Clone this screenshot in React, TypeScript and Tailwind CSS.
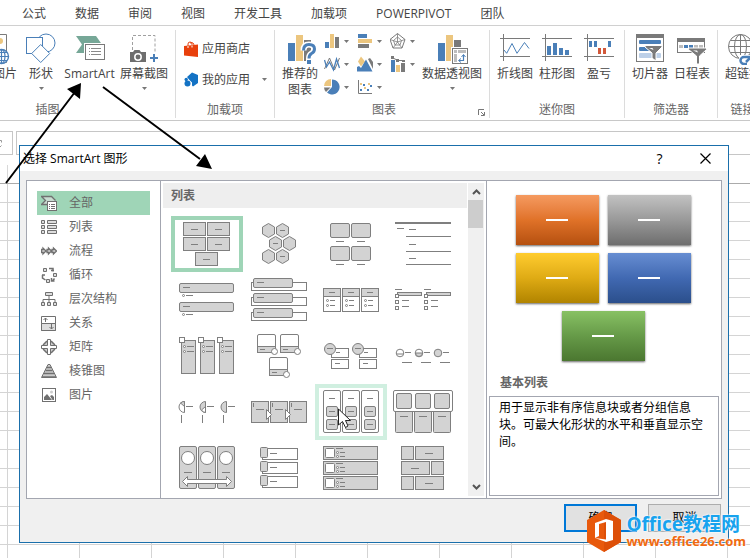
import React from "react";

type Kids = { children?: React.ReactNode };

const LINE = "#7f7f7f";
const FILL = "#d3d3d3";
const BLUE = "#4a7fb8";
const SAND = "#ecc67f";
const GRAY = "#7a7a7a";

/* ---------- drawing helpers ---------- */

function Box({ x, y, w, h, r = 0, fill = FILL }: { x: number; y: number; w: number; h: number; r?: number; fill?: string }) {
  return <rect x={x + 0.5} y={y + 0.5} width={w - 1} height={h - 1} rx={r} fill={fill} stroke={LINE} />;
}

function Dash({ x, y, w = 7 }: { x: number; y: number; w?: number }) {
  return <rect x={x} y={y} width={w} height={1} fill={LINE} />;
}

function Dot({ x, y }: { x: number; y: number }) {
  return <circle cx={x + 0.5} cy={y + 0.5} r={1} fill="#fff" stroke={LINE} />;
}

function Hex({ x, y, mark }: { x: number; y: number; mark?: boolean }) {
  return (
    <g>
      <path d={`M${x} ${y - 7}l6 3.5v7l-6 3.5l-6 -3.5v-7z`} fill={FILL} stroke={LINE} />
      {mark && <Dash x={x - 2.5} y={y - 0.5} w={5} />}
    </g>
  );
}

/* ---------- ribbon icons ---------- */

function Big({ children }: Kids) {
  return (
    <svg width="32" height="32" viewBox="0 0 32 32" fill="none" className="shrink-0" aria-hidden="true">
      {children}
    </svg>
  );
}

function Small({ children }: Kids) {
  return (
    <svg width="16" height="16" viewBox="0 0 16 16" fill="none" className="shrink-0" aria-hidden="true">
      {children}
    </svg>
  );
}

function Caret() {
  return (
    <svg width="5" height="3" viewBox="0 0 5 3" className="shrink-0" aria-hidden="true">
      <path d="M0 0h5L2.5 3z" fill="#777" />
    </svg>
  );
}

const PictureIcon = () => (
  <Big>
    <path d="M0 1.500h17.500v28H0" stroke={GRAY} fill="#fff" />
    <circle cx="11" cy="8" r="3" fill={SAND} />
    <circle cx="12.500" cy="23.500" r="7" fill="#fff" stroke={BLUE} strokeWidth="1.400" />
    <path d="M5.500 23.500h14M7 19.500h11M7 27.500h11M12.500 16.500v14" stroke={BLUE} strokeWidth="1.200" />
    <ellipse cx="12.500" cy="23.500" rx="3.500" ry="7" stroke={BLUE} strokeWidth="1.200" />
  </Big>
);

const ShapesIcon = () => (
  <Big>
    <circle cx="21" cy="10" r="9" stroke={BLUE} fill="#fff" />
    <rect x="1.500" y="4.500" width="16" height="16" stroke={BLUE} fill="#fff" />
    <path d="M15.700 11.500l9 9l-9 9l-9 -9z" stroke={BLUE} fill="#fff" />
  </Big>
);

const SmartArtIcon = () => (
  <Big>
    <path d="M2 3h20l6 8.500l-6 8.500H2l6 -8.500z" fill="#76a797" />
    <rect x="10" y="10" width="22" height="18" fill="#fff" />
    <rect x="11.500" y="11.500" width="19" height="15" fill="#fff" stroke={GRAY} />
    <path d="M15 15.500h1M17 15.500h10M15 18.500h1M17 18.500h10M15 21.500h1M17 21.500h10" stroke="#8a8a8a" />
  </Big>
);

const ScreenshotIcon = () => (
  <Big>
    <path d="M4.500 17V2.500H27V19" stroke="#a0a0a0" strokeDasharray="3 2" />
    <path d="M2 19h3l1.500 -2h5l1.500 2h5v10H2z" fill="#6e6e6e" />
    <circle cx="10" cy="24" r="3.200" stroke="#fff" strokeWidth="1.500" />
    <path d="M22 25h8M26 21v8" stroke={BLUE} strokeWidth="2" />
  </Big>
);

const StoreIcon = () => (
  <Small>
    <path d="M0 5l14 -1.500V16L0 14.500z" fill="#e8400c" />
    <path d="M4 7V3q0 -2 2 -2t2 2v3M6 2q4 -1.500 4 3" stroke="#e8400c" />
    <path d="M4 5v2M8 4.500v2" stroke="#fff" />
  </Small>
);

const AppsIcon = () => (
  <Small>
    <path d="M3 5l5 -4.500l6 2.500v8l-5 3.500l-1 -1v-3l-3 -3z" fill="#1372c4" />
    <circle cx="2.200" cy="7.500" r="1.700" fill="#1372c4" />
    <circle cx="3.500" cy="11.500" r="3" fill="#1372c4" />
  </Small>
);

const RecommendIcon = () => (
  <Big>
    <rect x="4" y="10" width="7" height="18" fill={BLUE} />
    <rect x="12" y="2" width="7" height="26" fill={SAND} />
    <rect x="20" y="7" width="7" height="21" fill={GRAY} />
    <g stroke="#fff" strokeWidth="6">
      <path d="M19.500 17.500q0 -6 5.500 -6t5.500 4.500q0 3 -3 4.500q-2.500 1.500 -2.500 5v4.500" />
    </g>
    <path d="M19.500 17.500q0 -6 5.500 -6t5.500 4.500q0 3 -3 4.500q-2.500 1.500 -2.500 5" stroke={BLUE} strokeWidth="3" />
    <rect x="23" y="27" width="4" height="4" fill={BLUE} />
  </Big>
);

const PivotIcon = () => (
  <Big>
    <rect x="2" y="10" width="7" height="18" fill={BLUE} />
    <rect x="10" y="2" width="7" height="26" fill={SAND} />
    <rect x="18" y="7" width="7" height="9" fill={GRAY} />
    <rect x="15" y="14" width="17" height="18" fill="#fff" />
    <rect x="16.500" y="15.500" width="15" height="15" fill="#fff" stroke={GRAY} />
    <path d="M18 17h3v3h-3zM22 17h8v3h-8zM18 21h3v8h-3z" fill="#bdbdbd" />
    <path d="M23 27.500h4.500V22" stroke={BLUE} strokeWidth="1.200" />
    <path d="M25 25.500l-2.500 2l2.500 2M25.500 24l2 -2.500l2 2.500" stroke={BLUE} />
  </Big>
);

const SparkFrame = () => <path d="M1 5.500h30M1 23.500h30M4.500 1v27" stroke={GRAY} />;

const SparkLineIcon = () => (
  <Big>
    <SparkFrame />
    <path d="M5 17l2.700 3.300L13 10.500l5 9.800L25.500 9.500l4.500 6" stroke={BLUE} />
  </Big>
);

const SparkColumnIcon = () => (
  <Big>
    <SparkFrame />
    <path d="M6 13h4v9H6zM12 10h4v12h-4zM18 15h4v7h-4zM24 17h4v5h-4z" fill={BLUE} />
  </Big>
);

const WinLossIcon = () => (
  <Big>
    <SparkFrame />
    <path d="M6 8h3v6H6zM11 8h3v6h-3zM25 8h3v6h-3z" fill={BLUE} />
    <path d="M15 15h3v6h-3zM20 15h3v6h-3z" fill="#d2583a" />
  </Big>
);

const SlicerIcon = () => (
  <Big>
    <rect x="2.500" y="1.500" width="27" height="27" fill="#fff" stroke={GRAY} />
    <rect x="2" y="1" width="28" height="4" fill={GRAY} />
    <rect x="5" y="7" width="22" height="4" rx="1" fill={BLUE} />
    <rect x="5" y="14" width="14" height="4" rx="1" fill={BLUE} />
    <rect x="5" y="20" width="22" height="5" rx="1" fill="#bdd0e8" />
    <path d="M11 12.500h17v1.500l-6 6v8l-4 -3v-5l-7 -6z" fill={GRAY} stroke="#fff" />
    <path d="M15 15h3.500l1 2z" fill="#fff" />
  </Big>
);

const TimelineIcon = () => (
  <Big>
    <rect x="1.500" y="5.500" width="27" height="14" fill="#fff" stroke={GRAY} />
    <rect x="1" y="5" width="28" height="4" fill={GRAY} />
    <path d="M3 12h4v3H3zM18 12h4v3h-4zM23 12h4v3h-4z" fill="#bdbdbd" />
    <path d="M8 12h4v3H8zM13 12h4v3h-4z" fill={BLUE} />
    <path d="M12.500 15h18v1.500l-7 6.500v8h-3v-8l-8 -6.500z" fill={GRAY} stroke="#fff" />
    <path d="M17 17.500h4l1 2z" fill="#fff" />
  </Big>
);

const LinkIcon = () => (
  <Big>
    <g stroke={GRAY}>
      <circle cx="13.500" cy="13.500" r="12" fill="#fff" />
      <ellipse cx="13.500" cy="13.500" rx="6" ry="12" />
      <path d="M1.500 13.500h24M13.500 1.500v24M3.500 7.500h20M3.500 19.500h20" />
    </g>
    <rect x="12" y="22" width="13" height="9" fill="#fff" />
    <path d="M24 24h-7a3.500 3.500 0 0 0 0 7h3M19 29l4 -4h6" stroke={BLUE} strokeWidth="2.500" />
  </Big>
);

const smallCharts: { name: string; art: React.ReactNode }[] = [
  {
    name: "柱形图",
    art: (
      <>
        <rect x="1" y="9" width="4" height="6" fill={BLUE} />
        <rect x="6" y="1" width="4" height="14" fill={SAND} />
        <rect x="11" y="4" width="4" height="11" fill={GRAY} />
      </>
    ),
  },
  {
    name: "条形图",
    art: (
      <>
        <rect x="1" y="1" width="9" height="4" fill={BLUE} />
        <rect x="1" y="6" width="14" height="4" fill={SAND} />
        <rect x="1" y="11" width="11" height="4" fill={GRAY} />
      </>
    ),
  },
  {
    name: "雷达图",
    art: (
      <g stroke={GRAY}>
        <path d="M7.500 .5l7.500 6l-3 8.500H3L0 6.500z" />
        <path d="M7.500 4l4 3.500l-1.500 4.500H5L3.500 7.500zM7.500 .5V9M15 6.500L7.500 9l4.500 6M0 6.500L7.500 9L3 15" strokeWidth=".8" />
      </g>
    ),
  },
  {
    name: "折线图",
    art: (
      <>
        <path d="M.5 13l5 -11l5 12l5 -12" stroke={GRAY} />
        <path d="M.5 4l2 7l3 -5l4 8l3 -11l3 9" stroke={BLUE} strokeWidth="1.300" />
      </>
    ),
  },
  {
    name: "面积图",
    art: (
      <>
        <path d="M4 .5l4 5l-4 5l-3 -5z" fill={SAND} />
        <path d="M11 3l2 -1l3 4v7z" fill={GRAY} />
        <path d="M0 15.500V11l2 -1l2 2l5 -8.500l6.500 12z" fill={BLUE} />
      </>
    ),
  },
  {
    name: "组合图",
    art: (
      <>
        <rect x="1" y="4" width="4" height="12" fill={BLUE} />
        <rect x="6" y="9" width="4" height="7" fill={SAND} />
        <rect x="11" y="7" width="4" height="9" fill={GRAY} />
        <path d="M2 1.500l6 3h6" stroke={GRAY} />
        <path d="M1 0h3v3H1zM6 3h3v3H6zM12 4h3v2h-3z" fill={GRAY} />
      </>
    ),
  },
  {
    name: "饼图",
    art: (
      <>
        <path d="M8 8V.5a7.500 7.500 0 1 1 -5 13z" fill={BLUE} />
        <path d="M7 7V0a7 7 0 0 0 -7 7z" fill={SAND} />
        <path d="M6.500 8.500H0a7 7 0 0 0 2 4.500z" fill={GRAY} />
      </>
    ),
  },
  {
    name: "散点图",
    art: (
      <>
        <path d="M1.500 1v13.500H15" stroke={GRAY} />
        <path d="M3 10h2v2H3zM6 5h2v2H6zM13 6h2v2h-2zM10 10h2v2h-2z" fill={BLUE} />
        <path d="M3 4h2v2H3zM7 8h2v2H7zM11 4h2v2h-2z" fill={SAND} />
      </>
    ),
  },
];

/* ---------- ribbon ---------- */

function Group({ label, className, children, launcher }: Kids & { label: string; className: string; launcher?: boolean }) {
  return (
    <section aria-label={label} className={`relative flex h-[88px] shrink-0 flex-col justify-between border-r border-[#dcdcdc] pt-[3px] ${className}`}>
      <div className="flex items-start">{children}</div>
      <div className="text-center text-[#666]">{label}</div>
      {launcher && (
        <button aria-label="对话框启动器" className="absolute right-1 bottom-[2px]">
          <svg width="7" height="7" viewBox="0 0 7 7" fill="none" className="block" aria-hidden="true">
            <path d="M.5 6V.5H6M3 3l3 3M6.500 3v3.500H3" stroke="#777" />
          </svg>
        </button>
      )}
    </section>
  );
}

function BigButton({ icon, label, className = "w-[42px]", caret }: { icon: React.ReactNode; label: React.ReactNode; className?: string; caret?: boolean }) {
  return (
    <button className={`flex shrink-0 flex-col items-center gap-px whitespace-nowrap ${className}`}>
      {icon}
      <span>{label}</span>
      {caret && (
        <span className="pt-1">
          <Caret />
        </span>
      )}
    </button>
  );
}

function Ribbon() {
  return (
    <div className="flex h-[95px] border-b border-[#c8c8c8] pt-1">
      <Group label="插图" className="-ml-20 w-64">
        <div className="flex w-full justify-end pr-[7px]">
          <BigButton icon={<PictureIcon />} label="图片" className="w-9" />
          <BigButton icon={<ShapesIcon />} label="形状" className="w-9" caret />
          <BigButton icon={<SmartArtIcon />} label="SmartArt" className="w-[61px]" />
          <BigButton icon={<ScreenshotIcon />} label="屏幕截图" className="w-12" caret />
        </div>
      </Group>
      <Group label="加载项" className="w-[99px]">
        <div className="flex flex-col pl-2">
          <button className="flex h-[31px] items-center gap-[2px]">
            <StoreIcon />
            应用商店
          </button>
          <button className="flex h-[31px] items-center gap-[2px]">
            <AppsIcon />
            我的应用
            <span className="pl-[10px]">
              <Caret />
            </span>
          </button>
        </div>
      </Group>
      <Group label="图表" className="w-[215px] pl-1" launcher>
        <BigButton
          icon={<RecommendIcon />}
          label={
            <>
              推荐的
              <br />
              图表
            </>
          }
        />
        <div className="ml-[3px] grid w-[98px] grid-cols-[33px_33px_auto]">
          {smallCharts.map((c) => (
            <button key={c.name} aria-label={c.name} className="flex h-[23px] items-start gap-1">
              <Small>{c.art}</Small>
              <span className="flex h-4 items-center">
                <Caret />
              </span>
            </button>
          ))}
        </div>
        <BigButton icon={<PivotIcon />} label="数据透视图" className="w-[60px]" caret />
      </Group>
      <Group label="迷你图" className="w-[135px] px-1">
        <BigButton icon={<SparkLineIcon />} label="折线图" />
        <BigButton icon={<SparkColumnIcon />} label="柱形图" />
        <BigButton icon={<WinLossIcon />} label="盈亏" />
      </Group>
      <Group label="筛选器" className="w-[93px] px-1">
        <BigButton icon={<SlicerIcon />} label="切片器" />
        <BigButton icon={<TimelineIcon />} label="日程表" />
      </Group>
      <Group label="链接" className="w-[50px] px-1">
        <BigButton icon={<LinkIcon />} label="超链接" />
      </Group>
    </div>
  );
}

/* ---------- dialog: category list ---------- */

const S = "#707070";

const categories: { name: string; art: React.ReactNode }[] = [
  {
    name: "全部",
    art: (
      <>
        <path d="M6 9.500H.5l4 -4l-4 -4h10l4 4" stroke={S} strokeWidth="1.300" fill="#c9dcd1" />
        <rect x="6.500" y="6.500" width="9" height="9" fill="#fff" stroke={S} />
        <path d="M8 9.500h1M10 9.500h4M8 11.500h1M10 11.500h4M8 13.500h1M10 13.500h4" stroke={S} />
      </>
    ),
  },
  {
    name: "列表",
    art: (
      <g stroke={S} fill="#ddd">
        <path d="M.5 1.500h3v3h-3zM.5 6.500h3v3h-3zM.5 11.500h3v3h-3zM6.500 1.500h9v3h-9zM6.500 6.500h9v3h-9zM6.500 11.500h9v3h-9z" />
      </g>
    ),
  },
  {
    name: "流程",
    art: (
      <g stroke={S} fill="#ccc">
        <path d="M.5 6.500h1.500v-1.500l3 3l-3 3V9.500H.5zM6 6.500h1.500v-1.500l3 3l-3 3V9.500H6zM11 6.500h1.500v-1.500l3 3l-3 3V9.500H11z" strokeWidth="1.300" />
      </g>
    ),
  },
  {
    name: "循环",
    art: (
      <g stroke={S} fill="#ddd">
        <path d="M2.500 1.500h3v3h-3zM12.500 6.500h3v3h-3zM5.500 12.500h3v3h-3z" />
        <path d="M8 1.500h4v3M10 3.500h3M1 8h3M1.500 8v3l3 2M13.500 11.500l-2 2.500M10.500 11v3h3" strokeWidth="1.500" fill="none" />
      </g>
    ),
  },
  {
    name: "层次结构",
    art: (
      <g stroke={S} fill="#ddd">
        <path d="M4.500 1.500h7v3h-7zM.5 11.500h3v3h-3zM6.500 11.500h3v3h-3zM12.500 11.500h3v3h-3z" />
        <path d="M8 5v6M2 11V8.500h12V11" fill="none" />
      </g>
    ),
  },
  {
    name: "关系",
    art: (
      <g stroke={S}>
        <path d="M.5 1.500h14v14H.5z" fill="#fff" />
        <path d="M.5 8.500h14v7H.5z" fill="#ddd" />
        <path d="M4.500 7V3M2.500 5l2 -2l2 2M10.500 9v5M8.500 12l2 2l2 -2" />
      </g>
    ),
  },
  {
    name: "矩阵",
    art: (
      <g stroke={S}>
        <path d="M5.500 2.500h5l3 3v5l-3 3h-5l-3 -3v-5z" fill="#ccc" strokeWidth="1.500" />
        <path d="M6.500 .5h3v6h6v3h-6v6h-3v-6h-6v-3h6z" fill="#fff" />
      </g>
    ),
  },
  {
    name: "棱锥图",
    art: (
      <g stroke={S}>
        <path d="M7 1.500h2l6.500 13H.5z" fill="#ccc" />
        <path d="M6 4.500h4M4.500 7.500h7M3 10.500h10M1 14h14" strokeWidth="1.300" />
      </g>
    ),
  },
  {
    name: "图片",
    art: (
      <>
        <rect x="1.500" y="1.500" width="13" height="13" fill="#fff" stroke={S} />
        <path d="M3 13v-3l3 -3l5 6zM9 9l2 -1l2 2v3h-1.500z" fill={S} />
        <circle cx="10.500" cy="5" r="1.500" fill="#ccc" />
      </>
    ),
  },
];

/* ---------- dialog: layout thumbnails ---------- */

const three = [0, 19, 38];

const layouts: { name: string; art: React.ReactNode }[] = [
  {
    name: "基本列表",
    art: [[12, 6], [36, 6], [12, 21], [36, 21], [24, 36]].map(([x, y]) => (
      <g key={`${x}-${y}`}>
        <Box x={x} y={y} w={23} h={14} />
        <Dash x={x + 8} y={y + 7} />
      </g>
    )),
  },
  {
    name: "交替六边形",
    art: (
      <>
        <Hex x={25.5} y={14.5} />
        <Hex x={39.5} y={14.5} mark />
        <Hex x={32.5} y={27.5} mark />
        <Hex x={46.5} y={27.5} />
        <Hex x={25.5} y={40.5} />
        <Hex x={39.5} y={40.5} mark />
      </>
    ),
  },
  {
    name: "图片题注列表",
    art: [[15, 7], [36, 7], [15, 30], [36, 30]].map(([x, y]) => (
      <g key={`${x}-${y}`}>
        <Box x={x} y={y} w={20} h={15} r={1.5} />
        <Dash x={x + 6} y={y + 18} w={8} />
      </g>
    )),
  },
  {
    name: "线型列表",
    art: (
      <>
        <rect x="8" y="6" width="56" height="2" fill={LINE} />
        <Dash x={10} y={12} />
        <Dash x={22} y={13} />
        <Dash x={19} y={20} w={45} />
        <Dash x={22} y={28} />
        <Dash x={19} y={35} w={45} />
        <Dash x={22} y={42} />
        <Dash x={19} y={48} w={45} />
      </>
    ),
  },
  {
    name: "垂直项目符号列表",
    art: [11, 30].map((y) => (
      <g key={y}>
        <Box x={8} y={y} w={55} h={10} r={1.5} />
        <Dash x={12} y={y + 4} />
        <Dot x={12} y={y + 12} />
        <Dash x={15} y={y + 12} />
      </g>
    )),
  },
  {
    name: "垂直框列表",
    art: [6, 21, 36].map((y) => (
      <g key={y}>
        <Box x={8} y={y + 4} w={56} h={9} fill="#fff" />
        <Box x={10} y={y} w={40} h={10} r={1.5} />
        <Dash x={14} y={y + 4} />
      </g>
    )),
  },
  {
    name: "水平项目符号列表",
    art: three.map((d) => (
      <g key={d}>
        <Box x={8 + d} y={16} w={18} h={24} fill="#fff" />
        <Box x={8 + d} y={16} w={18} h={9} />
        <Dash x={14 + d} y={20} w={6} />
        <Dot x={12 + d} y={28} />
        <Dot x={12 + d} y={33} />
        <Dash x={15 + d} y={28} w={5} />
        <Dash x={15 + d} y={33} w={5} />
      </g>
    )),
  },
  {
    name: "方形重点列表",
    art: [0, 29].map((d) => (
      <g key={d}>
        <Dash x={8 + d} y={17} />
        <Box x={10 + d} y={20} w={25} h={4} />
        <Box x={8 + d} y={22} w={4} h={4} fill="#fff" />
        <Box x={8 + d} y={28} w={4} h={4} fill="#fff" />
        <Box x={8 + d} y={34} w={4} h={4} fill="#fff" />
        <Dash x={15 + d} y={28} />
        <Dash x={15 + d} y={34} />
      </g>
    )),
  },
  {
    name: "图片重点列表",
    art: three.map((d) => (
      <g key={d}>
        <Box x={10 + d} y={12} w={15} h={34} />
        <Box x={8 + d} y={9} w={6} h={6} fill="#fff" />
        <Dot x={13 + d} y={18} />
        <Dot x={13 + d} y={23} />
        <Dash x={16 + d} y={18} />
        <Dash x={16 + d} y={23} />
      </g>
    )),
  },
  {
    name: "蛇形图片重点列表",
    art: [[14, 6], [37, 6], [26, 29]].map(([x, y]) => (
      <g key={`${x}-${y}`}>
        <Box x={x} y={y} w={19} h={19} r={1.5} fill="#fff" />
        <Box x={x} y={y + 12} w={19} h={7} />
        <Dash x={x + 3} y={y + 15} w={5} />
        <circle cx={x + 17.5} cy={y + 17.5} r={3} fill="#fff" stroke={LINE} />
      </g>
    )),
  },
  {
    name: "堆叠列表",
    art: [0, 28].map((d) => (
      <g key={d}>
        <Box x={16 + d} y={20} w={18} h={10} fill="#fff" />
        <Box x={16 + d} y={31} w={18} h={10} fill="#fff" />
        <Dash x={21 + d} y={24} w={4} />
        <Dash x={20 + d} y={35} w={5} />
        <circle cx={15 + d} cy={21} r={5.5} fill={FILL} stroke={LINE} />
        <Dash x={12 + d} y={20} w={6} />
      </g>
    )),
  },
  {
    name: "递增圆圈流程",
    art: (
      <>
        {three.map((d) => (
          <g key={d}>
            <circle cx={13 + d} cy={25} r={3.8} fill={d === 38 ? FILL : "#fff"} stroke={LINE} />
            <Dash x={18 + d} y={24} w={6} />
            <Dash x={15 + d} y={34} w={10} />
          </g>
        ))}
        <path d="M9.500 26h7M28.500 25h7a3.500 3.500 0 0 1 -7 0" stroke={LINE} fill={FILL} />
      </>
    ),
  },
  {
    name: "饼图流程",
    art: (
      <>
        {[0, 21, 42].map((d) => (
          <g key={d}>
            <path d={`M${13.5 + d} 17.500a5.500 5.500 0 0 0 0 11z`} fill={d === 0 ? "#fff" : FILL} stroke={LINE} />
            <Dash x={15 + d} y={22} />
            <rect x={10 + d} y={31} width={1} height={8} fill={LINE} />
          </g>
        ))}
        <path d="M13.500 22.500l-4 -3.500q1.500 -1.500 4 -1.500z" fill={FILL} stroke={LINE} />
        <path d="M34.500 22.500l-4 3.500q1.500 2.500 4 2.500z" fill="#fff" stroke={LINE} />
      </>
    ),
  },
  {
    name: "详细流程",
    art: (
      <>
        {three.map((d) => (
          <g key={d}>
            <Box x={8 + d} y={17} w={18} h={22} />
            <rect x={10 + d} y={19} width={1} height={4} fill={LINE} />
            <Dash x={13 + d} y={25} w={8} />
          </g>
        ))}
        <path d="M23.500 25.500l5 5l-5 5zM42.500 25.500l5 5l-5 5z" fill="#fff" stroke={LINE} />
      </>
    ),
  },
  {
    name: "分组列表",
    art: three.map((d) => (
      <g key={d}>
        <Box x={8 + d} y={6} w={18} h={43} r={1.5} fill="#fff" />
        <Dash x={14 + d} y={14} w={6} />
        <Box x={11 + d} y={22} w={12} h={11} r={1.5} />
        <Box x={11 + d} y={35} w={12} h={11} r={1.5} />
        <Dash x={14 + d} y={27} w={6} />
        <Dash x={14 + d} y={40} w={6} />
      </g>
    )),
  },
  {
    name: "水平图片列表",
    art: (
      <>
        {three.map((d) => (
          <g key={d}>
            <Box x={8 + d} y={26} w={18} h={23} r={1} />
            <Dash x={13 + d} y={32} w={8} />
          </g>
        ))}
        <Box x={6} y={6} w={60} h={22} r={1.5} fill="#fff" />
        {three.map((d) => (
          <Box key={d} x={9 + d} y={9} w={16} h={16} r={1.5} />
        ))}
      </>
    ),
  },
  {
    name: "连续图片列表",
    art: (
      <>
        {three.map((d) => (
          <g key={d}>
            <Box x={8 + d} y={6} w={18} h={43} r={1.5} />
            <circle cx={17 + d} cy={18} r={6.5} fill="#fff" stroke={LINE} />
            <Dash x={13 + d} y={32} w={8} />
          </g>
        ))}
        <path d="M11.500 41.500l5 -5v3h39v-3l5 5l-5 5v-3h-39v3z" fill="#fff" stroke={LINE} />
      </>
    ),
  },
  {
    name: "垂直图片重点列表",
    art: [7, 21, 35].map((y) => (
      <g key={y}>
        <Box x={19} y={y + 1} w={36} h={12} fill="#fff" />
        <Box x={17} y={y} w={8} h={11} r={1} />
        <Dash x={27} y={y + 6} />
      </g>
    )),
  },
  {
    name: "垂直图片列表",
    art: [6, 21, 36].map((y) => (
      <g key={y}>
        <Box x={8} y={y} w={55} h={14} />
        <Box x={10} y={y + 2} w={10} h={10} r={1} fill="#fff" />
        <Dash x={21} y={y + 2} />
        <Dot x={22} y={y + 6} />
        <Dot x={22} y={y + 10} />
        <Dash x={25} y={y + 6} w={5} />
        <Dash x={25} y={y + 10} w={5} />
      </g>
    )),
  },
  {
    name: "水平交替列表",
    art: (
      <>
        {[6, 36].map((y) => (
          <g key={y}>
            <Box x={14} y={y} w={13} h={14} />
            <Box x={28} y={y} w={29} h={14} />
            <Dash x={38} y={y + 7} w={8} />
          </g>
        ))}
        <Box x={14} y={21} w={29} h={14} />
        <Box x={44} y={21} w={13} h={14} />
        <Dash x={24} y={28} w={8} />
      </>
    ),
  },
];

const previewCards = [
  "from-[#f59a5f] via-[#e07228] to-[#b5500f]",
  "from-[#c2c2c2] via-[#999] to-[#6e6e6e]",
  "from-[#ffcc2e] via-[#dfab14] to-[#b18400]",
  "from-[#678ed2] via-[#4169b2] to-[#2b4f8c]",
  "from-[#88c164] via-[#669a48] to-[#4b7730]",
];

function SmartArtDialog() {
  return (
    <div role="dialog" aria-labelledby="dlg-title" className="absolute top-[145px] right-[21px] left-[19px] border border-[#1a6fab] bg-[#f0f0f0]">
      <header className="flex h-[25px] items-center bg-white pl-[3px] text-black">
        <h1 id="dlg-title" className="flex-1">
          选择 SmartArt 图形
        </h1>
        <button aria-label="帮助" className="w-[45px] text-center text-sm font-medium">
          ?
        </button>
        <button aria-label="关闭" className="flex w-[46px] justify-center">
          <svg width="11" height="11" viewBox="0 0 11 11" aria-hidden="true">
            <path d="M.5 .5l10 10M10.500 .5l-10 10" stroke="#000" strokeWidth="1.200" />
          </svg>
        </button>
      </header>

      <div className="px-[6px] pt-[9px] pb-[10px]">
        <div className="flex h-[319px] border border-[#a3a6b0] bg-white">
          <ul className="w-[134px] shrink-0 border-r border-[#a3a6b0] px-[10px] pt-[10px]">
            {categories.map((c, i) => (
              <li key={c.name}>
                <button className={`flex h-6 w-full items-center gap-3 pl-1 text-[#666] ${i === 0 ? "bg-[#9fd5b7]" : ""}`}>
                  <Small>{c.art}</Small>
                  {c.name}
                </button>
              </li>
            ))}
          </ul>

          <div className="flex w-[326px] shrink-0 gap-px border-r border-[#a3a6b0] py-[2px] pl-[2px]">
            <div>
              <h2 className="flex h-[25px] w-[304px] items-center bg-[#eee] pl-2 font-bold text-[#666]">列表</h2>
              <div className="grid grid-cols-4 px-2 pt-2">
                {layouts.map((l, i) => (
                  <button
                    key={l.name}
                    aria-label={l.name}
                    className={`h-14 w-[72px] border-4 ${i === 0 ? "border-[#9fd5b7]" : i === 14 ? "border-[#d0efe0]" : "border-transparent"}`}
                  >
                    <svg width="64" height="48" viewBox="4 4 64 48" fill="none" className="block" aria-hidden="true">
                      {l.art}
                    </svg>
                  </button>
                ))}
              </div>
            </div>
            <div className="flex w-4 flex-col items-center bg-[#f0f0f0] pb-[6px]">
              <svg width="9" height="17" viewBox="0 0 9 17" fill="none" aria-hidden="true">
                <path d="M1 11l3.500 -3.500l3.500 3.500" stroke="#555" strokeWidth="2" />
              </svg>
              <div className="h-7 w-[15px] self-start bg-[#cdcdcd]" />
              <svg width="9" height="6" viewBox="0 0 9 6" fill="none" className="mt-auto" aria-hidden="true">
                <path d="M1 1l3.500 3.500l3.500 -3.500" stroke="#555" strokeWidth="2" />
              </svg>
            </div>
          </div>

          <div className="flex min-w-0 flex-1 flex-col px-[2px] pb-[2px]">
            <div className="flex flex-wrap justify-center gap-x-[9px] gap-y-2 pt-[14px] pr-[22px] pl-5">
              {previewCards.map((c) => (
                <div key={c} className={`flex h-[50px] w-[83px] items-center justify-center bg-linear-to-b shadow-[0_1px_2px_rgba(0,0,0,0.6)] ${c}`}>
                  <div className="h-[2px] w-[22px] bg-white" />
                </div>
              ))}
            </div>
            <h2 className="pt-[14px] pb-[5px] pl-[11px] font-bold text-[#666]">基本列表</h2>
            <p className="flex-1 border border-[#a3a6b0] pt-[2px] pr-[9px] pl-[9px] leading-[17px] text-black">
              用于显示非有序信息块或者分组信息块。可最大化形状的水平和垂直显示空间。
            </p>
          </div>
        </div>

        <div className="flex justify-end gap-[11px] pt-[5px] pr-px text-black">
          <button className="h-7 w-[73px] border-2 border-[#0078d7] bg-[#e1e1e1]">确定</button>
          <button className="h-7 w-[73px] border border-[#adadad] bg-[#e1e1e1]">取消</button>
        </div>
      </div>
    </div>
  );
}

function Watermark() {
  return (
    <div className="absolute right-1 bottom-[5px] flex items-center gap-1 font-bold">
      <svg width="36" height="44" viewBox="0 0 36 44" aria-hidden="true">
        <path d="M18 1l17 10v22L18 43L1 33V11z" fill="#e8590c" />
        <path d="M18 1l17 10v22L18 43z" fill="#dd4f08" />
        <path d="M9 14l11 -4l7 2v19l-7 2l-11 -4l11 1.500V13l-7 2v12l-4 2z" fill="#fff" />
      </svg>
      <div className="whitespace-nowrap">
        <div className="text-[19px] leading-5 text-[#18a3ee] [text-shadow:0_0_2px_#fff,0_0_2px_#fff]">Office教程网</div>
        <div className="text-[13px] leading-[14px] text-[#f06a10] [text-shadow:0_0_2px_#fff,0_0_2px_#fff]">www.office26.com</div>
      </div>
    </div>
  );
}

const tabs = ["公式", "数据", "审阅", "视图", "开发工具", "加载项", "POWERPIVOT", "团队"];

export default function App() {
  return (
    <div className="relative flex min-h-screen flex-col overflow-hidden bg-white font-['Open_Sans','Noto_Sans_CJK_SC',sans-serif] text-xs text-[#444]">
      <nav className="flex h-[26px] items-center gap-[29px] border-b border-[#d0d0d0] pt-[2px] pl-[22px] whitespace-nowrap">
        {tabs.map((t) => (
          <button key={t}>{t}</button>
        ))}
      </nav>
      <Ribbon />

      <div className="flex gap-[3px] pt-[10px]">
        <div className="flex h-6 w-[13px] items-center border border-l-0 border-[#c6c6c6]">
          <svg width="4" height="9" viewBox="0 0 4 9" fill="none" aria-hidden="true">
            <path d="M0 1.500h1.500v2M0 8l1.500 -1.500" stroke="#999" />
          </svg>
        </div>
        <input aria-label="编辑栏" className="h-6 min-w-0 flex-1 border border-r-0 border-[#c6c6c6] bg-white" />
      </div>

      <div className="flex h-[29px] items-end border-b border-[#ababab]">
        <div className="h-[18px] w-2 border-r border-[#d8d8d8]" />
      </div>
      <div className="flex-1 bg-[linear-gradient(to_right,transparent_71px,#d4d4d4_71px),linear-gradient(to_bottom,transparent_18px,#d4d4d4_18px)] bg-[size:72px_19px] bg-[position:-64px_0]" />

      <SmartArtDialog />

      <svg width="230" height="190" viewBox="0 0 230 190" className="pointer-events-none absolute top-0 left-0" aria-hidden="true">
        <path d="M6 183L75 92M103 87l97 72" stroke="#000" strokeWidth="2" />
        <path d="M81 83l-14 6l13 10zM212 169l-16 -3l9 -12z" fill="#000" />
      </svg>
      <svg width="13" height="21" viewBox="0 0 13 21" className="pointer-events-none absolute top-[408px] left-[338px]" aria-hidden="true">
        <path d="M.5 1v16l4 -3.500l3 6l2.500 -1.500l-2.500 -5.500h5z" fill="#fff" stroke="#222" />
      </svg>
      <Watermark />
    </div>
  );
}
